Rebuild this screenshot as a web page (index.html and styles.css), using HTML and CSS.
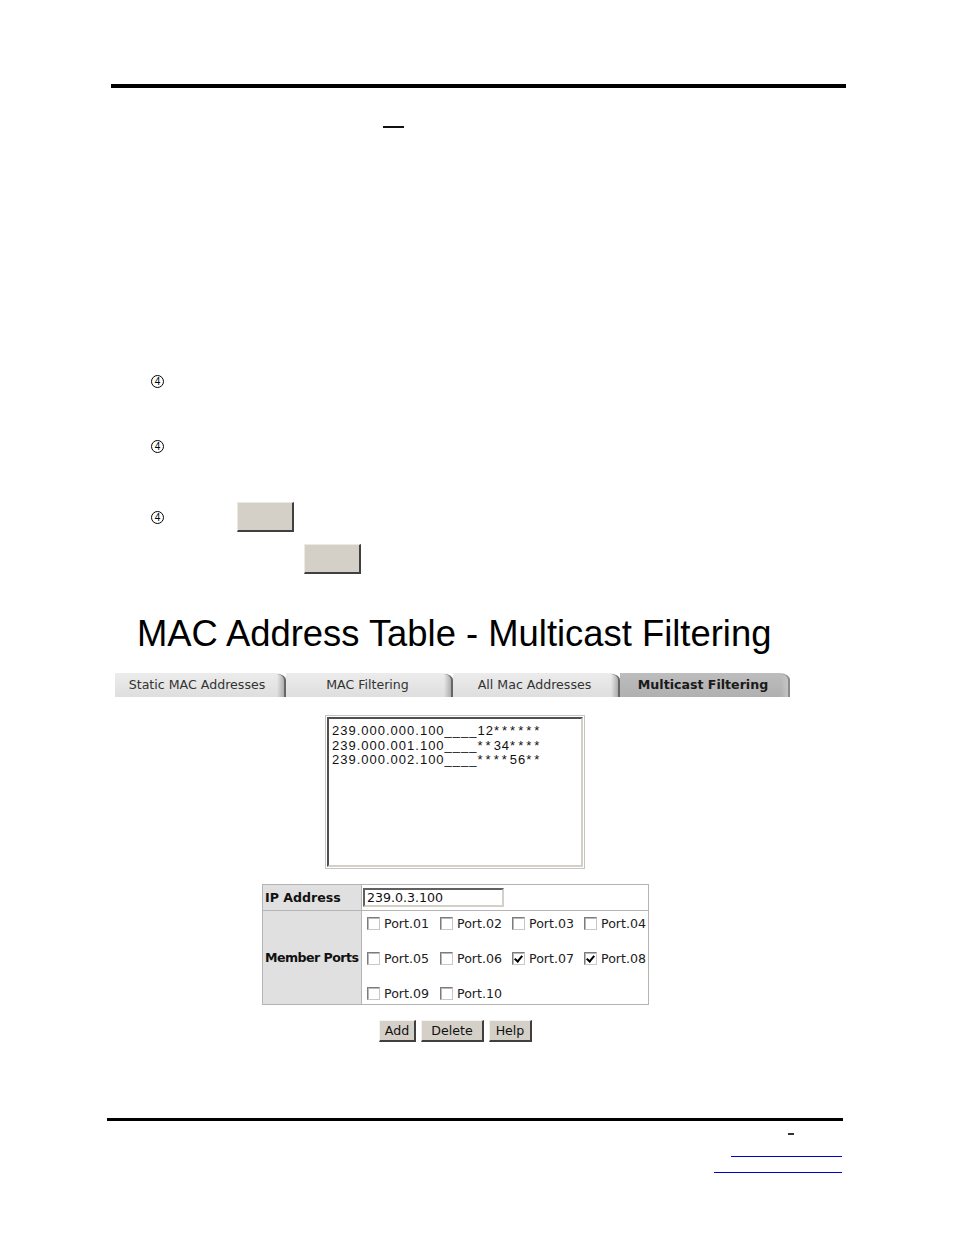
FILE: index.html
```html
<!DOCTYPE html>
<html>
<head>
<meta charset="utf-8">
<link rel="stylesheet" href="styles.css">
</head>
<body>
<div class="page">
  <div class="rule-top"></div>
  <div class="dash"></div>

  <div class="steps">
    <div class="step s1"><span class="mark">4</span></div>
    <div class="step s2"><span class="mark">4</span></div>
    <div class="step s3"><span class="mark">4</span><span class="blank-btn b1"></span></div>
    <div class="step s4"><span class="blank-btn b2"></span></div>
  </div>

  <h1 class="title">MAC Address Table - Multicast Filtering</h1>

  <div class="tabs">
    <div class="tab t1">Static MAC Addresses</div>
    <div class="tab t2">MAC Filtering</div>
    <div class="tab t3">All Mac Addresses</div>
    <div class="tab t4 active">Multicast Filtering</div>
  </div>

  <div class="content">
    <div class="listbox">
      <div class="listbox-inner">
        <div class="line">239.000.000.100____12<span class="ast">******</span></div>
        <div class="line">239.000.001.100____<span class="ast">**</span>34<span class="ast">****</span></div>
        <div class="line">239.000.002.100____<span class="ast">****</span>56<span class="ast">**</span></div>
      </div>
    </div>

    <table class="form">
      <colgroup><col class="c-label"><col class="c-field"></colgroup>
      <tr class="row-ip">
        <td class="label">IP Address</td>
        <td class="field"><div class="textbox">239.0.3.100</div></td>
      </tr>
      <tr class="row-ports">
        <td class="label narrow">Member Ports</td>
        <td class="field">
          <div class="ports">
            <div class="port"><span class="cb"></span>Port.01</div>
            <div class="port"><span class="cb"></span>Port.02</div>
            <div class="port"><span class="cb"></span>Port.03</div>
            <div class="port"><span class="cb"></span>Port.04</div>
            <div class="port"><span class="cb"></span>Port.05</div>
            <div class="port"><span class="cb"></span>Port.06</div>
            <div class="port"><span class="cb checked"></span>Port.07</div>
            <div class="port"><span class="cb checked"></span>Port.08</div>
            <div class="port"><span class="cb"></span>Port.09</div>
            <div class="port"><span class="cb"></span>Port.10</div>
          </div>
        </td>
      </tr>
    </table>

    <div class="actions">
      <span class="btn b-add">Add</span>
      <span class="btn b-del">Delete</span>
      <span class="btn b-help">Help</span>
    </div>
  </div>

  <div class="rule-bottom"></div>
  <div class="foot-dash"></div>
  <div class="link-line l1"></div>
  <div class="link-line l2"></div>
</div>
</body>
</html>
```

FILE: styles.css
```css
html, body {
  margin: 0;
  padding: 0;
  background: #fff;
}
.page {
  display: flow-root;
  width: 954px;
  height: 1235px;
  font-family: "DejaVu Sans", Verdana, sans-serif;
  color: #000;
}
.rule-top {
  margin: 84px 0 0 111px;
  width: 735px;
  height: 4px;
  background: #000;
}
.dash {
  margin: 38px 0 0 383px;
  width: 21px;
  height: 2px;
  background: #111;
}

/* steps */
.steps {
  margin-left: 151px;
}
.step {
  display: flex;
  align-items: center;
}
.s1 { margin-top: 246px; height: 15px; }
.s2 { margin-top: 50px; height: 15px; }
.s3 { margin-top: 48px; height: 30px; }
.s4 { margin-top: 12px; height: 30px; padding-left: 153px; }
.mark {
  display: inline-flex;
  align-items: center;
  justify-content: center;
  box-sizing: border-box;
  width: 13px;
  height: 13px;
  border: 1px solid #000;
  border-radius: 50%;
  font-family: "Liberation Sans", Arial, sans-serif;
  font-size: 10px;
  line-height: 10px;
  padding-top: 1px;
}
.blank-btn {
  display: inline-block;
  box-sizing: border-box;
  width: 57px;
  height: 30px;
  background: #d4d0c8;
  border-top: 1px solid #ece9e3;
  border-left: 1px solid #ece9e3;
  border-right: 2px solid #404040;
  border-bottom: 2px solid #404040;
}
.b1 { margin-left: 73px; }

/* title */
.title {
  margin: 40px 0 0 137px;
  height: 40px;
  font-family: "Liberation Sans", Arial, sans-serif;
  font-weight: normal;
  font-size: 36.4px;
  line-height: 40px;
  color: #000;
  letter-spacing: 0;
}

/* tabs */
.tabs {
  display: flex;
  margin: 19px 0 0 115px;
  height: 24px;
}
.tab {
  position: relative;
  box-sizing: border-box;
  height: 24px;
  background: linear-gradient(#ececec, #dedede);
  border-top-right-radius: 10px 7px;
  font-size: 12.6px;
  line-height: 24px;
  text-align: center;
  color: #333;
  padding-right: 4px;
}
.tab::after {
  content: "";
  position: absolute;
  right: 0;
  top: 1px;
  bottom: 0;
  width: 7px;
  border-right: 2px solid #666;
  border-top-right-radius: 10px 7px;
  background: linear-gradient(to right, rgba(160,160,160,0), rgba(150,150,150,0.7));
}
.t1 { width: 171px; padding-right: 7px; }
.t2 { width: 167px; }
.t3 { width: 167px; }
.t4 { width: 170px; }
.tab.active {
  background: linear-gradient(#bdbdbd, #b0b0b0);
  font-weight: bold;
  color: #1a1a1a;
}
.tab.active::after {
  border-right-color: #8a8a8a;
  background: linear-gradient(to right, rgba(180,180,180,0), rgba(200,200,200,0.8));
}

/* content */
.content {
  margin-left: 262px;
  width: 386px;
}
.listbox {
  box-sizing: border-box;
  width: 260px;
  height: 154px;
  margin: 18px auto 0;
  border: 1px solid #c4c4c4;
  padding: 1px;
}
.listbox-inner {
  box-sizing: border-box;
  height: 100%;
  border-style: solid;
  border-width: 2px;
  border-color: #505050 #d4d0c8 #d4d0c8 #505050;
  padding: 5px 0 0 3px;
  font-family: "Liberation Sans", Arial, sans-serif;
  font-size: 13px;
  line-height: 14.5px;
  letter-spacing: 1px;
  color: #111;
}
.ast { letter-spacing: 3px; }

table.form {
  margin-top: 15px;
  width: 386px;
  table-layout: fixed;
  border-collapse: collapse;
  font-size: 12.6px;
}
col.c-label { width: 99px; }
col.c-field { width: 287px; }
table.form td {
  border: 1px solid #b4b4b4;
  padding: 0;
}
td.label {
  background: #e0e0e0;
  font-weight: bold;
  padding-left: 2px !important;
  white-space: nowrap;
  color: #111;
  overflow: hidden;
}
td.label.narrow { letter-spacing: -0.55px; }
.row-ip td { height: 25px; }
.row-ports td { height: 92px; }
td.field { padding-left: 1px !important; }
.textbox {
  box-sizing: border-box;
  width: 141px;
  height: 19px;
  border-style: solid;
  border-width: 2px;
  border-color: #606060 #d4d0c8 #d4d0c8 #606060;
  padding-left: 2px;
  font-size: 12.6px;
  line-height: 15px;
  color: #111;
}
.ports {
  display: grid;
  grid-template-columns: 73px 72px 72px auto;
  grid-auto-rows: 22px;
  row-gap: 13px;
  padding: 1px 0 0 4px;
}
.port {
  display: flex;
  align-items: center;
  white-space: nowrap;
  color: #222;
}
.cb {
  position: relative;
  box-sizing: border-box;
  width: 13px;
  height: 13px;
  margin-right: 4px;
  background: #fff;
  border-style: solid;
  border-width: 1px;
  border-color: #7c7c7c #c8c8c8 #c8c8c8 #7c7c7c;
  box-shadow: inset 1px 1px 0 #b8b8b8;
}
.cb.checked::after {
  content: "";
  position: absolute;
  left: 3px;
  top: 1px;
  width: 3px;
  height: 6px;
  border-right: 2px solid #000;
  border-bottom: 2px solid #000;
  transform: rotate(40deg);
}

.actions {
  display: flex;
  justify-content: center;
  gap: 5px;
  margin-top: 15px;
  padding-left: 1px;
}
.btn {
  box-sizing: border-box;
  height: 22px;
  background: #d4d0c8;
  border-top: 1px solid #f4f3ef;
  border-left: 1px solid #f4f3ef;
  border-right: 2px solid #404040;
  border-bottom: 2px solid #404040;
  font-size: 12.6px;
  line-height: 19px;
  text-align: center;
  color: #111;
}
.b-add { width: 37px; }
.b-del { width: 63px; }
.b-help { width: 43px; }

/* footer */
.rule-bottom {
  margin: 76px 0 0 107px;
  width: 736px;
  height: 3px;
  background: #000;
}
.foot-dash {
  margin: 12px 0 0 788px;
  width: 6px;
  height: 2px;
  background: #333;
}
.link-line {
  height: 1px;
  background: #0000c0;
}
.l1 { margin: 21px 0 0 731px; width: 111px; }
.l2 { margin: 15px 0 0 714px; width: 128px; }
```
